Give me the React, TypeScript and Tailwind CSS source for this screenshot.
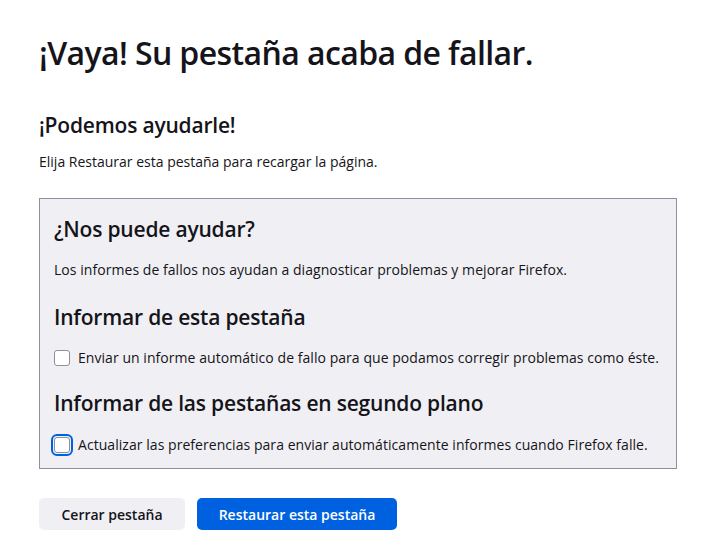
import React from "react";

export default function App() {
  return (
    <div
      className="min-h-[549px] bg-white pl-[39px] pt-[33px] text-[#15141a]"
      style={{ fontFamily: '"Open Sans", "Noto Sans", sans-serif' }}
    >
      <h1 className="text-[32px] font-semibold leading-[40px] tracking-[-0.6px]">
        ¡Vaya! Su pestaña acaba de fallar.
      </h1>
      <h2 className="mt-[38px] text-[21px] font-semibold leading-[28px] tracking-[-0.2px]">
        ¡Podemos ayudarle!
      </h2>
      <p className="mt-[13px] text-[14px] leading-[20px]">
        Elija Restaurar esta pestaña para recargar la página.
      </p>

      <div className="mt-[26px] w-[638px] border border-[#8f8f9d] bg-[#f0f0f4] pb-[13px] pl-[14px] pt-[16px]">
        <h3 className="text-[21px] font-semibold leading-[28px] tracking-[-0.2px]">
          ¿Nos puede ayudar?
        </h3>
        <p className="mt-[17px] text-[14px] leading-[20px] tracking-[0.05px]">
          Los informes de fallos nos ayudan a diagnosticar problemas y mejorar Firefox.
        </p>
        <h3 className="mt-[23px] text-[21px] font-semibold leading-[28px] tracking-[-0.2px]">
          Informar de esta pestaña
        </h3>
        <label className="mt-[17px] flex h-[20px] items-center gap-[8px] text-[14px] leading-[20px] tracking-[0.05px]">
          <span className="block h-[16px] w-[16px] shrink-0 rounded-[3px] border border-[#8f8f9d] bg-white" />
          <span>Enviar un informe automático de fallo para que podamos corregir problemas como éste.</span>
        </label>
        <h3 className="mt-[21px] text-[21px] font-semibold leading-[28px] tracking-[-0.2px]">
          Informar de las pestañas en segundo plano
        </h3>
        <label className="mt-[18px] flex h-[20px] items-center gap-[8px] text-[14px] leading-[20px] tracking-[0.05px]">
          <span className="block h-[16px] w-[16px] shrink-0 rounded-[3px] border border-[#8f8f9d] bg-white outline-2 outline-offset-1 outline-[#0061e0] outline-solid" />
          <span>Actualizar las preferencias para enviar automáticamente informes cuando Firefox falle.</span>
        </label>
      </div>

      <div className="mt-[29px] flex gap-[12px]">
        <button className="h-[32px] w-[146px] rounded-[5px] bg-[#f0f0f4] text-[14px] font-semibold text-[#15141a]">
          Cerrar pestaña
        </button>
        <button className="h-[32px] w-[200px] rounded-[5px] bg-[#0061e0] text-[14px] font-semibold text-white">
          Restaurar esta pestaña
        </button>
      </div>
    </div>
  );
}
